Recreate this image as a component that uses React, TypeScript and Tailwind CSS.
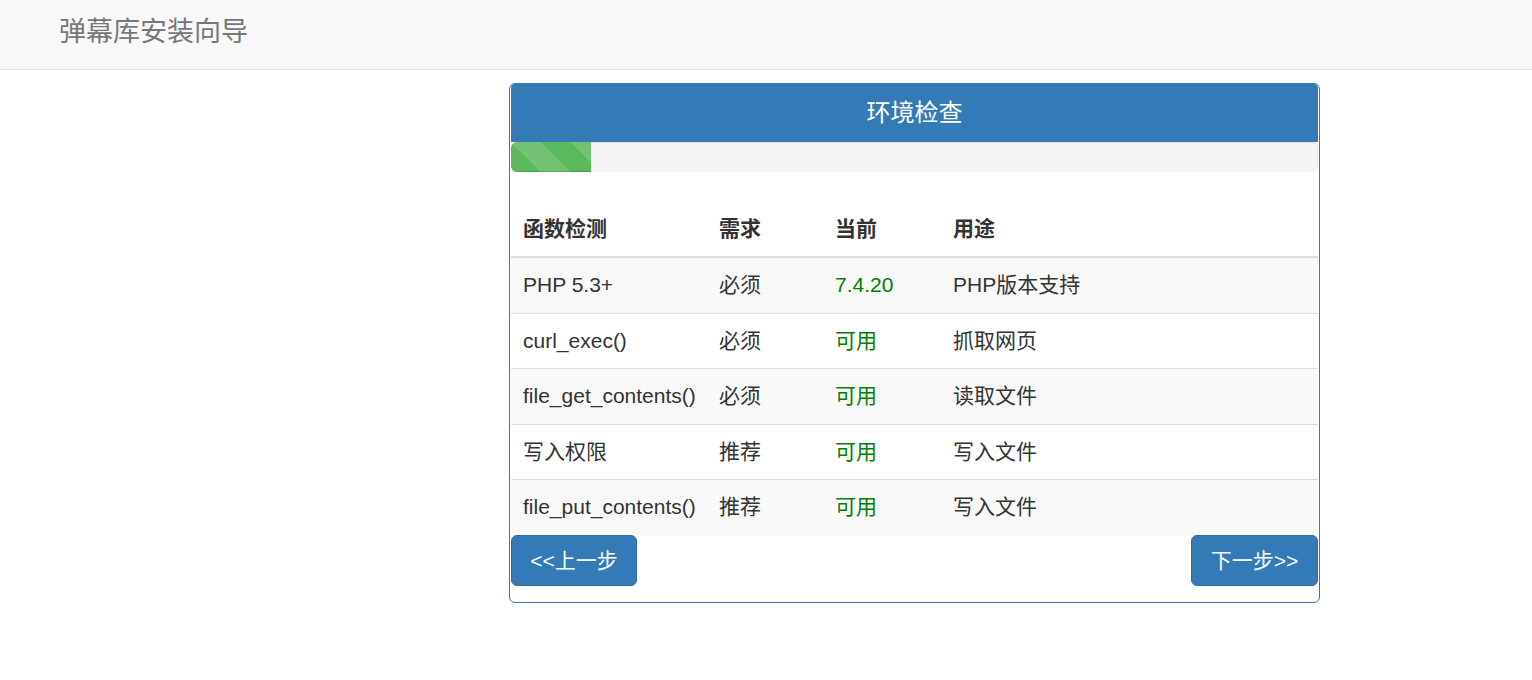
const font = "font-['Liberation_Sans','Noto_Sans_CJK_SC',sans-serif]";

type Row = { name: string; need: string; current: string; use: string };

const rows: Row[] = [
  { name: 'PHP 5.3+', need: '必须', current: '7.4.20', use: 'PHP版本支持' },
  { name: 'curl_exec()', need: '必须', current: '可用', use: '抓取网页' },
  { name: 'file_get_contents()', need: '必须', current: '可用', use: '读取文件' },
  { name: '写入权限', need: '推荐', current: '可用', use: '写入文件' },
  { name: 'file_put_contents()', need: '推荐', current: '可用', use: '写入文件' },
];

export default function App() {
  return (
    <div className={`${font} min-h-[680px] bg-white text-[#333] text-[21px] leading-[30px]`}>
      <nav className="h-[70px] bg-[#f8f8f8] border-b border-[#e7e7e7] flex items-center pl-[59px] pb-[6px]">
        <span className="text-[27px] leading-[30px] text-[#777]">弹幕库安装向导</span>
      </nav>

      <div className="pl-[509px] pt-[13px]">
        <div className="w-[811px] border border-[#337ab7] rounded-[6px] px-[1px] pb-[16px]">
          <div className="bg-[#337ab7] text-white text-center text-[24px] leading-[28px] pt-[15px] pb-[15px] rounded-t-[4px]">
            环境检查
          </div>

          <div className="h-[30px] bg-[#f5f5f5] rounded-[6px] shadow-[inset_0_1px_2px_rgba(0,0,0,0.1)] overflow-hidden">
            <div className="h-full w-[80px] bg-[#5cb85c] bg-[linear-gradient(45deg,rgba(255,255,255,0.15)_25%,transparent_25%,transparent_50%,rgba(255,255,255,0.15)_50%,rgba(255,255,255,0.15)_75%,transparent_75%,transparent)] bg-[length:60px_60px] shadow-[inset_0_-1px_0_rgba(0,0,0,0.15)]" />
          </div>

          <table className="w-full table-fixed mt-[30px] border-collapse">
            <thead>
              <tr className="border-b-2 border-[#ddd]">
                <th className="text-left font-bold px-[12px] py-[12px] w-[196px]">函数检测</th>
                <th className="text-left font-bold px-[12px] py-[12px] w-[116px]">需求</th>
                <th className="text-left font-bold px-[12px] py-[12px] w-[118px]">当前</th>
                <th className="text-left font-bold px-[12px] py-[12px]">用途</th>
              </tr>
            </thead>
            <tbody>
              {rows.map((r, i) => (
                <tr key={i} className={`${i > 0 ? 'border-t border-[#ddd]' : ''} ${i % 2 === 0 ? 'bg-[#f9f9f9]' : 'bg-white'} leading-[30.5px]`}>
                  <td className="px-[12px] py-[12px] whitespace-nowrap">{r.name}</td>
                  <td className="px-[12px] py-[12px]">{r.need}</td>
                  <td className="px-[12px] py-[12px] text-[#008000]">{r.current}</td>
                  <td className="px-[12px] py-[12px]">{r.use}</td>
                </tr>
              ))}
            </tbody>
          </table>

          <div className="flex justify-between">
            <button className="bg-[#337ab7] border border-[#2e6da4] text-white rounded-[6px] px-[18px] py-[9px] text-[21px] leading-[31px] w-[126px]">
              &lt;&lt;上一步
            </button>
            <button className="bg-[#337ab7] border border-[#2e6da4] text-white rounded-[6px] px-[18px] py-[9px] text-[21px] leading-[31px] w-[127px]">
              下一步&gt;&gt;
            </button>
          </div>
        </div>
      </div>
    </div>
  );
}
